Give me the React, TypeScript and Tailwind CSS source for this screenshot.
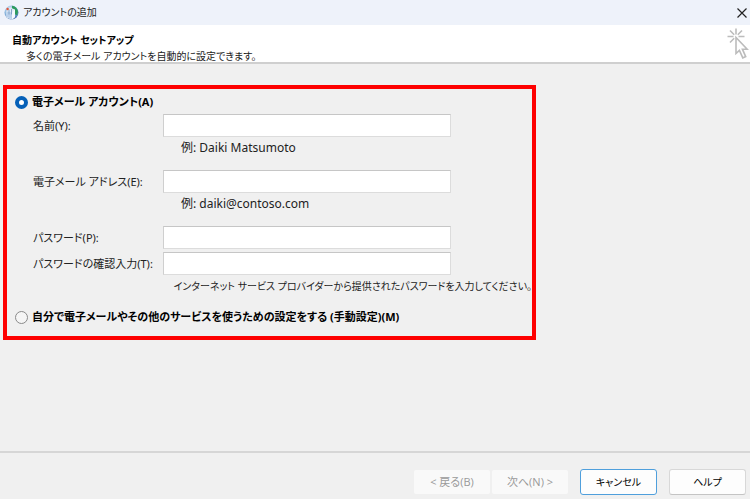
import { useState } from 'react';
import type { ReactNode } from 'react';

function GlobeIcon() {
  return (
    <svg width="16" height="16" viewBox="0 0 16 16" aria-hidden="true">
      <defs>
        <radialGradient id="globe" cx="0.4" cy="0.3" r="0.8">
          <stop offset="0" stopColor="#e4f1fb" />
          <stop offset="0.55" stopColor="#86b3dc" />
          <stop offset="1" stopColor="#2f5aa0" />
        </radialGradient>
      </defs>
      <circle cx="7.500" cy="7.600" r="7" fill="url(#globe)" />
      <path d="M8 .8c3.200.2 5.700 2.800 6 5.800l-.8 3.600-2-.8-.8-3.400-2.400-2z" fill="#2c9b5e" />
      <path d="M2.400 6 6 2.600l5 1.800v7.600l-3 2.800-5.600-2.400z" fill="#dfeaf5" />
      <path d="M2.800 6.400 8 7.600v6.600l-5.200-2.100z" fill="#b9d0ea" />
      <path d="M8 7.600l3-3v7.300L8 14.200z" fill="#f4f8fc" />
      <path d="M5 4.500v5M7.500 4v5.400" stroke="#6f94bd" strokeWidth=".8" />
      <circle cx="3.600" cy="4" r="1.200" fill="#e0573f" />
    </svg>
  );
}

function ClickIcon() {
  return (
    <svg width="22" height="32" viewBox="0 0 22 32" fill="none" stroke="#bcbcbc" strokeWidth="1.6" aria-hidden="true">
      <path d="M9 .5v6M.5 8.500h6M11.500 8.500h6M3 2.500l4.200 4.200M15 2.500l-4.200 4.200M3 14.500l4.200-4.200" />
      <path d="M9 9.500v16l3.400-3.200 3.400 7.600 2.900-1.300-3.300-7.400h4.800z" fill="#fff" />
    </svg>
  );
}

function Field({ id, label, type = 'text' }: { id: string; label: string; type?: string }) {
  return (
    <div className="flex items-center">
      <label htmlFor={id} className="w-[130px] shrink-0 pt-px text-[11px] whitespace-nowrap">{label}</label>
      <input
        id={id}
        type={type}
        className="h-[23px] w-72 min-w-0 border border-[#dcdcdc] border-t-[#c6c6c6] border-l-[#cfcfcf] bg-white px-1 outline-none"
      />
    </div>
  );
}

function ModeRadio({ checked, onSelect, children }: { checked: boolean; onSelect: () => void; children: ReactNode }) {
  return (
    <label className="flex items-center gap-1 text-[11px] leading-4 font-bold whitespace-nowrap text-black">
      <input
        type="radio"
        name="mode"
        checked={checked}
        onChange={onSelect}
        className="size-[13px] shrink-0 appearance-none rounded-full border border-[#8a8a8a] bg-[#f5f5f5] checked:border-4 checked:border-[#0560b8] checked:bg-white"
      />
      {children}
    </label>
  );
}

const plainButton = 'h-[26px] w-[77px] rounded-[3px] border border-[#d8d8d8] border-b-[#c4c4c4] bg-[#fdfdfd] pt-0.5 text-[10px] text-black';
const defaultButton = 'h-[26px] w-[77px] rounded-[3px] border border-[#4f9fdc] bg-[#fdfdfd] pt-0.5 text-[10px] text-black';
const disabledButton = 'h-6 w-[76px] rounded-[2px] bg-[#f9f9f9] pt-0.5 text-[11px] text-[#9a9a9a]';
const hint = 'ml-[148px] leading-4 whitespace-nowrap';

export default function App() {
  const [mode, setMode] = useState('auto');

  return (
    <div className="flex min-h-screen flex-col bg-[#f0f0f0] font-['Noto_Sans','Noto_Sans_CJK_JP',sans-serif] text-[12px] text-[#222] [font-feature-settings:'palt','kern']">
      <div className="flex h-[25px] items-center justify-between bg-[#eef2fa] pr-0.5 pl-1">
        <div className="flex items-center gap-[3px] text-[10px]">
          <GlobeIcon />
          <span>アカウントの追加</span>
        </div>
        <button type="button" aria-label="閉じる" className="grid h-5 w-3 place-items-center">
          <svg width="10" height="10" viewBox="0 0 10 10" stroke="#222" strokeWidth="1.2" aria-hidden="true">
            <path d="M.5.5l9 9M9.500.5l-9 9" />
          </svg>
        </button>
      </div>

      <header className="flex h-[39px] justify-between border-b-2 border-[#cfcfcf] bg-white pl-3">
        <div className="pt-[7px] text-[10px] leading-4">
          <h1 className="font-bold text-black">自動アカウント セットアップ</h1>
          <p className="ml-[14px]">多くの電子メール アカウントを自動的に設定できます。</p>
        </div>
        <div className="pt-[3px] pr-px">
          <ClickIcon />
        </div>
      </header>

      <main className="flex-1 px-[3px] pt-[21px]">
        <form className="w-[533px] max-w-full border-4 border-[#fe0000] pt-[5px] pb-[11px] pl-2">
          <ModeRadio checked={mode === 'auto'} onSelect={() => setMode('auto')}>
            電子メール アカウント(A)
          </ModeRadio>
          <div className="mt-1 ml-[18px] flex flex-col gap-[14px]">
            <div className="flex flex-col gap-[3px]">
              <Field id="name" label="名前(Y):" />
              <p className={hint}>例: Daiki Matsumoto</p>
            </div>
            <div className="flex flex-col gap-[3px]">
              <Field id="email" label="電子メール アドレス(E):" />
              <p className={hint}>例: daiki@contoso.com</p>
            </div>
            <div className="flex flex-col gap-[3px]">
              <Field id="password" type="password" label="パスワード(P):" />
              <Field id="confirm" type="password" label="パスワードの確認入力(T):" />
              <p className="self-end text-[10px] leading-4 whitespace-nowrap">
                インターネット サービス プロバイダーから提供されたパスワードを入力してください。
              </p>
            </div>
          </div>
          <div className="mt-[15px]">
            <ModeRadio checked={mode === 'manual'} onSelect={() => setMode('manual')}>
              自分で電子メールやその他のサービスを使うための設定をする (手動設定)(M)
            </ModeRadio>
          </div>
        </form>
      </main>

      <footer className="flex h-12 items-center justify-end border-t-2 border-[#d6d6d6] pt-[15px] pr-1 pb-1 font-['Open_Sans','Noto_Sans_CJK_JP',sans-serif]">
        <div className="flex gap-[2px]">
          <button type="button" disabled className={disabledButton}>&lt; 戻る(B)</button>
          <button type="button" disabled className={disabledButton}>次へ(N) &gt;</button>
        </div>
        <div className="ml-3 flex gap-3">
          <button type="button" className={defaultButton}>キャンセル</button>
          <button type="button" className={plainButton}>ヘルプ</button>
        </div>
      </footer>
    </div>
  );
}
